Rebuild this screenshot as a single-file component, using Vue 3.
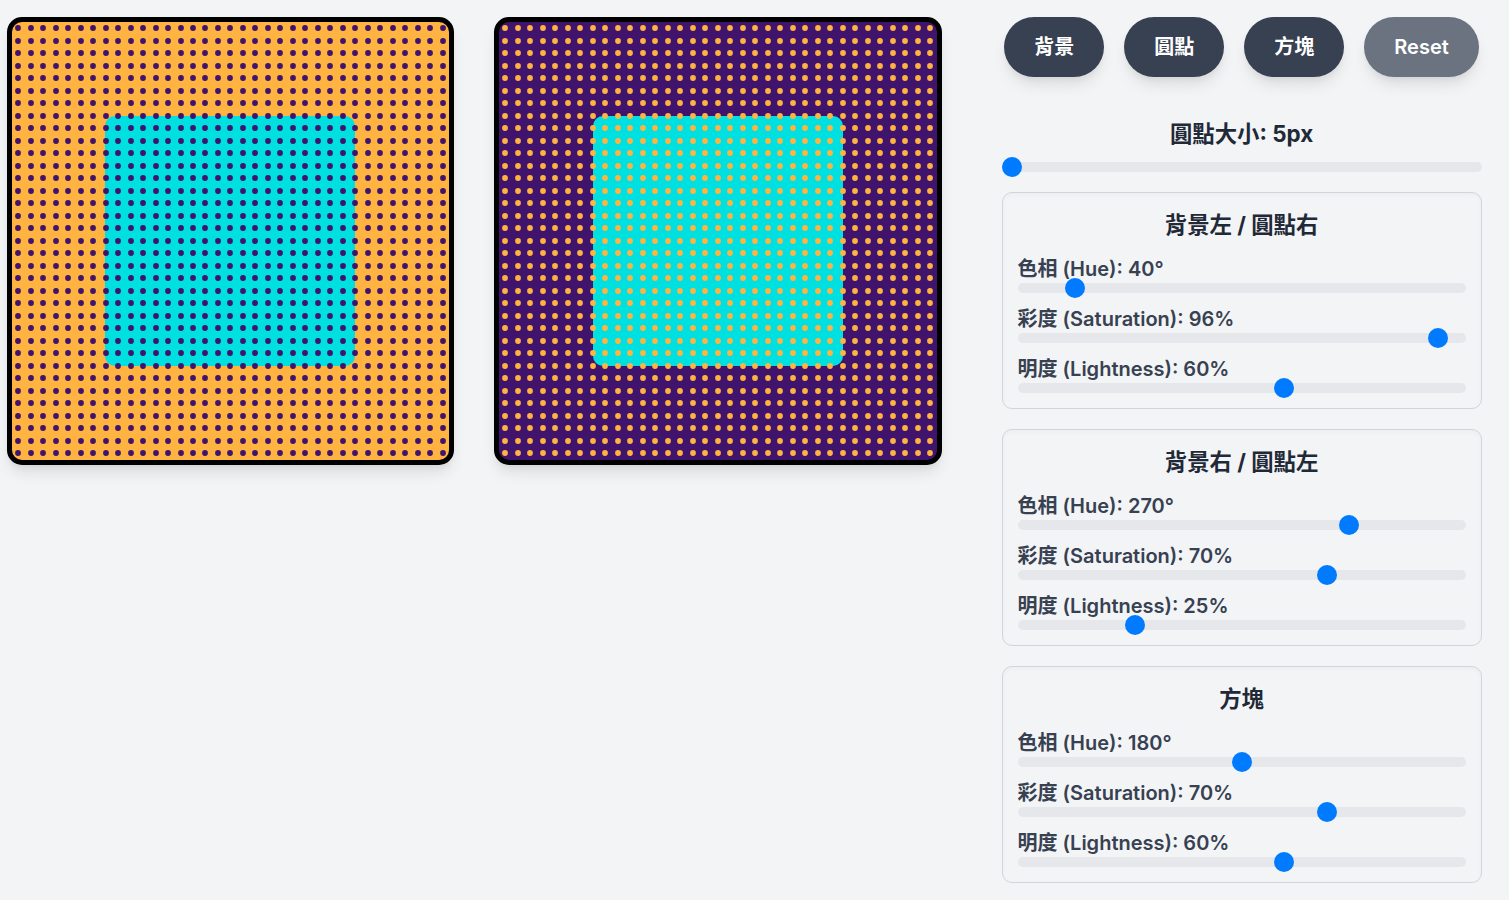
<script setup>
import { reactive, computed } from "vue";

const defaults = { size: 5, a: [40, 96, 60], b: [270, 70, 25], c: [180, 70, 60] };
const size = reactive({ value: defaults.size });
const groups = reactive([
  { key: "a", title: "背景左 / 圓點右", h: 40, s: 96, l: 60 },
  { key: "b", title: "背景右 / 圓點左", h: 270, s: 70, l: 25 },
  { key: "c", title: "方塊", h: 180, s: 70, l: 60 },
]);

const hsl = (g) => `hsl(${g.h}, ${g.s}%, ${g.l}%)`;
const colorA = computed(() => "#ffb340");
const colorB = computed(() => hsl(groups[1]));
const colorC = computed(() => "#00e0e0");
const dotPx = computed(() => size.value + 1 + "px");

const cells = Array.from({ length: 35 * 35 }, (_, i) => i);

function reset() {
  size.value = defaults.size;
  groups.forEach((g) => {
    [g.h, g.s, g.l] = defaults[g.key];
  });
}
</script>

<template>
  <div class="page">
    <div class="canvas" :style="{ background: colorA }">
      <div class="square" :style="{ background: colorC }"></div>
      <div class="dots">
        <div v-for="i in cells" :key="i" class="cell">
          <span class="dot" :style="{ width: dotPx, height: dotPx, background: colorB }"></span>
        </div>
      </div>
    </div>
    <div class="canvas second" :style="{ background: colorB }">
      <div class="square" :style="{ background: colorC }"></div>
      <div class="dots">
        <div v-for="i in cells" :key="i" class="cell">
          <span class="dot" :style="{ width: dotPx, height: dotPx, background: colorA }"></span>
        </div>
      </div>
    </div>
    <div class="panel">
      <div class="buttons">
        <button class="btn">背景</button>
        <button class="btn">圓點</button>
        <button class="btn">方塊</button>
        <button class="btn reset" @click="reset">Reset</button>
      </div>
      <div class="size-row">
        <h3>圓點大小: {{ size.value }}px</h3>
        <input v-model.number="size.value" type="range" min="5" max="12" />
      </div>
      <section v-for="g in groups" :key="g.key" class="card">
        <h3>{{ g.title }}</h3>
        <div class="row">
          <label>色相 (Hue): {{ g.h }}°</label>
          <input v-model.number="g.h" type="range" min="0" max="360" />
        </div>
        <div class="row">
          <label>彩度 (Saturation): {{ g.s }}%</label>
          <input v-model.number="g.s" type="range" min="0" max="100" />
        </div>
        <div class="row">
          <label>明度 (Lightness): {{ g.l }}%</label>
          <input v-model.number="g.l" type="range" min="0" max="100" />
        </div>
      </section>
    </div>
  </div>
</template>

<style>
body {
  background: #f3f4f6;
}
</style>

<style scoped>
.page {
  display: flex;
  align-items: flex-start;
  padding: 17px 0 0 6.8px;
  font-family: Inter, "Noto Sans CJK TC", sans-serif;
}

.canvas {
  position: relative;
  flex: none;
  display: flex;
  align-items: center;
  justify-content: center;
  width: 447.4px;
  height: 447.6px;
  box-sizing: border-box;
  border: 5px solid #000;
  border-radius: 15px;
  box-shadow: 0 10px 15px -3px rgba(0, 0, 0, 0.1), 0 4px 6px -2px rgba(0, 0, 0, 0.05);
  overflow: hidden;
}

.second {
  margin-left: 40px;
}

.square {
  width: 250px;
  height: 250px;
  border-radius: 10px;
}

.dots {
  position: absolute;
  inset: 0;
  display: grid;
  grid-template-columns: repeat(35, 1fr);
  grid-template-rows: repeat(35, 1fr);
}

.cell {
  display: flex;
  align-items: center;
  justify-content: center;
}

.dot {
  display: block;
  flex: none;
  border-radius: 50%;
  transform: scale(0.96);
}

.panel {
  flex: none;
  width: 480px;
  margin-left: 60px;
}

.buttons {
  display: flex;
  justify-content: center;
  gap: 20px;
  margin-bottom: 40px;
}

.btn {
  height: 60px;
  min-width: 100px;
  padding: 0 30px;
  border: 0;
  border-radius: 30px;
  background: #374151;
  color: #fff;
  font: 600 20px/24px Inter, "Noto Sans CJK TC", sans-serif;
  box-shadow: 0 10px 15px -3px rgba(0, 0, 0, 0.1), 0 4px 6px -2px rgba(0, 0, 0, 0.05);
}

.reset {
  background: #6b7280;
}

h3 {
  margin: 0 0 2px;
  font-size: 22.4px;
  font-weight: 700;
  line-height: 33px;
  text-align: center;
  color: #1f2937;
}

.size-row h3 {
  margin-bottom: 12px;
}

input[type="range"] {
  display: block;
  width: 100%;
  height: 10px;
  margin: 0;
  border-radius: 5px;
  background: #e5e7eb;
  outline: none;
  -webkit-appearance: none;
  appearance: none;
}

input[type="range"]::-webkit-slider-thumb {
  width: 20px;
  height: 20px;
  border-radius: 50%;
  background: #007bff;
  -webkit-appearance: none;
  appearance: none;
}

.card {
  margin-top: 20px;
  padding: 15px;
  border: 1px solid #d1d5db;
  border-radius: 10px;
  box-shadow: inset 0 2px 4px rgba(0, 0, 0, 0.03);
}

.row {
  padding-top: 12px;
}

label {
  display: block;
  font-size: 20px;
  font-weight: 600;
  line-height: 28px;
  color: #374151;
}
</style>
